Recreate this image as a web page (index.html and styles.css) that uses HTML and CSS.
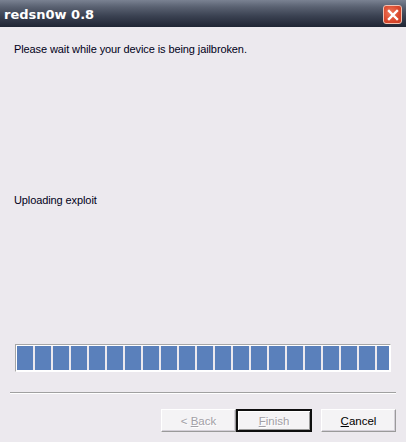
FILE: index.html
```html
<!DOCTYPE html>
<html lang="en">
<head>
  <meta charset="UTF-8">
  <title>redsn0w 0.8</title>
  <link rel="stylesheet" href="styles.css">
</head>
<body>
  <div class="window">
    <div class="titlebar">
      <span class="title">redsn0w 0.8</span>
      <span class="close">
        <svg width="12" height="12" viewBox="0 0 12 12">
          <path d="M2 2 L10 10 M10 2 L2 10" stroke="#fff" stroke-width="2.4" stroke-linecap="square"/>
        </svg>
      </span>
    </div>

    <div class="content">
      <p class="msg">Please wait while your device is being jailbroken.</p>
      <p class="step">Uploading exploit</p>

      <div class="progress">
        <div class="blocks">
          <span></span><span></span><span></span><span></span><span></span>
          <span></span><span></span><span></span><span></span><span></span>
          <span></span><span></span><span></span><span></span><span></span>
          <span></span><span></span><span></span><span></span><span></span>
          <span></span>
        </div>
      </div>
    </div>

    <div class="separator"></div>

    <div class="buttons">
      <button class="btn" disabled>&lt; <u>B</u>ack</button>
      <button class="btn default" disabled><u>F</u>inish</button>
      <button class="btn cancel"><u>C</u>ancel</button>
    </div>
  </div>
</body>
</html>
```

FILE: styles.css
```css
html, body {
  margin: 0;
  padding: 0;
}
body {
  width: 406px;
  height: 442px;
  overflow: hidden;
  background-color: #ece9ee;
  font-family: "Liberation Sans", Arial, sans-serif;
  font-size: 11px;
  color: #000;
}
.window {
  display: flex;
  flex-direction: column;
  height: 442px;
}
.titlebar {
  height: 27px;
  display: flex;
  align-items: center;
  justify-content: space-between;
  padding: 0 4px 0 4px;
  background: linear-gradient(to bottom, #7a8292 0%, #5a6272 25%, #3a4151 60%, #1f2534 100%);
  box-sizing: border-box;
}
.title {
  color: #fff;
  font-family: "DejaVu Sans", sans-serif;
  font-weight: bold;
  font-size: 13px;
  margin-top: 2px;
}
.close {
  width: 19px;
  height: 19px;
  box-sizing: border-box;
  border: 1px solid #f2c0b0;
  border-radius: 3px;
  background: radial-gradient(circle at 40% 40%, #f07a5c 0%, #d9472c 60%, #c23a22 100%);
  display: flex;
  align-items: center;
  justify-content: center;
  margin-top: 2px;
}
.content {
  padding: 0 16px 0 14px;
  display: flex;
  flex-direction: column;
}
.msg, .step {
  margin: 0;
  line-height: 14px;
  color: #000018;
  letter-spacing: -0.1px;
}
.msg {
  margin-top: 15px;
}
.step {
  margin-top: 137px;
}
.progress {
  margin-top: 137px;
  margin-left: 1px;
  width: 376px;
  height: 28px;
  box-sizing: border-box;
  border: 1px solid #fff;
  border-top-color: #a6a6a6;
  border-left-color: #a6a6a6;
  padding: 1px;
  background: #fff;
  overflow: hidden;
}
.blocks {
  display: flex;
  gap: 2px;
  height: 100%;
  overflow: hidden;
  background: #ece9ee;
}
.blocks span {
  flex: 0 0 16px;
  background: #5a80bb;
}
.separator {
  margin: 20px 10px 0 10px;
  height: 1px;
  background: #a0a0a0;
  border-bottom: 1px solid #fff;
}
.buttons {
  display: flex;
  justify-content: flex-end;
  padding-right: 10px;
  margin-top: 15px;
}
.btn {
  width: 75px;
  height: 23px;
  box-sizing: border-box;
  font-family: "Liberation Sans", Arial, sans-serif;
  font-size: 11.5px;
  color: #000;
  background: #f4f3f5;
  border: 1px solid;
  border-color: #fff #9a9a9a #9a9a9a #fff;
  box-shadow: inset -1px -1px 0 #d4d0d8;
  padding: 0;
}
.btn:disabled {
  color: #a2a0a6;
  text-shadow: 1px 1px 0 #fff;
}
.btn.default {
  border: 2px solid #0e0e0e;
  box-shadow: inset 1px 1px 0 #fff, inset -1px -1px 0 #9a9a9a;
  width: 76px;
}
.btn.cancel {
  margin-left: 9px;
}
```
